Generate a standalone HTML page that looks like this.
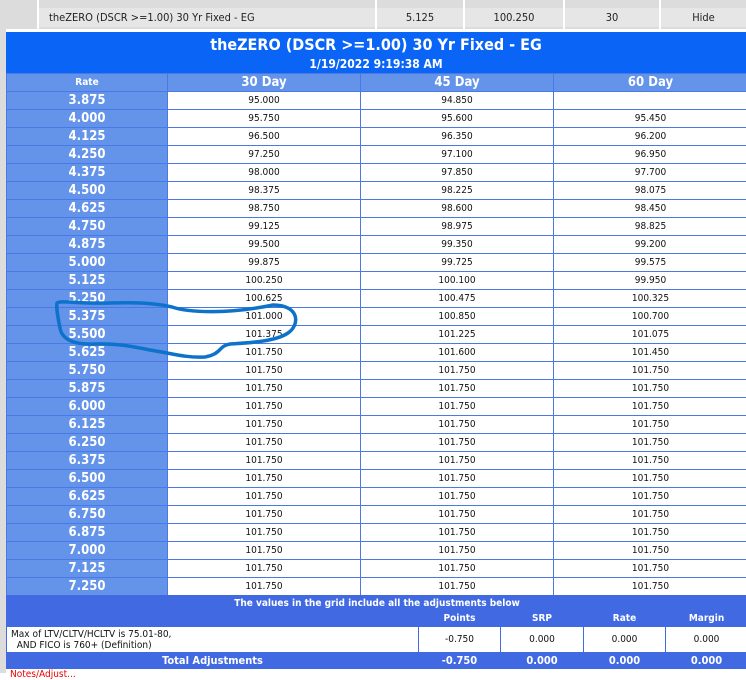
<!DOCTYPE html>
<html><head><meta charset="utf-8"><style>
body{margin:0;width:746px;height:673px;overflow:hidden;background:#fff;font-family:"DejaVu Sans Condensed","DejaVu Sans","Liberation Sans",sans-serif;position:relative}
.top{position:absolute;left:0;top:0;width:746px;height:29px;background:#dcdcdc}
.top div{position:absolute;top:8px;height:19px;background:#e6e6e6;font-size:11px;line-height:19px;color:#222}
.top i{position:absolute;top:0;width:2px;height:29px;background:#fff}
.strip{position:absolute;left:0;top:29px;width:6px;height:644px;background:#dcdcdc}
.hdr{position:absolute;left:6px;top:32px;width:740px;height:41px;background:#0a64f5;color:#fff;text-align:center;font-weight:bold}
table{position:absolute;left:6px;border-collapse:collapse;table-layout:fixed;width:741px}
td{border:1px solid #4a78e6;padding:0;text-align:center;font-size:10px;color:#111;height:17px;line-height:17px;overflow:hidden;white-space:nowrap}
td.r{background:#6493ea;color:#fff;font-weight:bold;font-size:13px}
tr.ch td{background:#6493ea;color:#fff;font-weight:bold;font-size:13px}
.ft td{background:#4169e1;color:#fff;font-weight:bold;font-size:10px;border-color:#4169e1;height:14px;line-height:14px}
.ft tr.w td{background:#fff;color:#111;font-weight:normal;border-color:#4169e1;height:25px;line-height:25px}
</style></head><body>
<div class="top">
<i style="left:37px"></i><i style="left:375px"></i><i style="left:463px"></i><i style="left:563px"></i><i style="left:659px"></i>
<div style="left:39px;width:336px;padding-left:10px;box-sizing:border-box">theZERO (DSCR &gt;=1.00) 30 Yr Fixed - EG</div>
<div style="left:377px;width:86px;text-align:center">5.125</div>
<div style="left:465px;width:98px;text-align:center">100.250</div>
<div style="left:565px;width:94px;text-align:center">30</div>
<div style="left:661px;width:85px;text-align:center">Hide</div>
</div>
<div class="strip"></div>
<div class="hdr"><div style="font-size:16px;line-height:22px;padding-top:2px">theZERO (DSCR &gt;=1.00) 30 Yr Fixed - EG</div><div style="font-size:12px;line-height:15px;padding-top:1px">1/19/2022 9:19:38 AM</div></div>
<table style="top:73px">
<colgroup><col style="width:161px"><col style="width:193px"><col style="width:193px"><col style="width:194px"></colgroup>
<tr class="ch"><td style="font-size:10px">Rate</td><td>30 Day</td><td>45 Day</td><td>60 Day</td></tr>
<tr><td class="r">3.875</td><td>95.000</td><td>94.850</td><td></td></tr>
<tr><td class="r">4.000</td><td>95.750</td><td>95.600</td><td>95.450</td></tr>
<tr><td class="r">4.125</td><td>96.500</td><td>96.350</td><td>96.200</td></tr>
<tr><td class="r">4.250</td><td>97.250</td><td>97.100</td><td>96.950</td></tr>
<tr><td class="r">4.375</td><td>98.000</td><td>97.850</td><td>97.700</td></tr>
<tr><td class="r">4.500</td><td>98.375</td><td>98.225</td><td>98.075</td></tr>
<tr><td class="r">4.625</td><td>98.750</td><td>98.600</td><td>98.450</td></tr>
<tr><td class="r">4.750</td><td>99.125</td><td>98.975</td><td>98.825</td></tr>
<tr><td class="r">4.875</td><td>99.500</td><td>99.350</td><td>99.200</td></tr>
<tr><td class="r">5.000</td><td>99.875</td><td>99.725</td><td>99.575</td></tr>
<tr><td class="r">5.125</td><td>100.250</td><td>100.100</td><td>99.950</td></tr>
<tr><td class="r">5.250</td><td>100.625</td><td>100.475</td><td>100.325</td></tr>
<tr><td class="r">5.375</td><td>101.000</td><td>100.850</td><td>100.700</td></tr>
<tr><td class="r">5.500</td><td>101.375</td><td>101.225</td><td>101.075</td></tr>
<tr><td class="r">5.625</td><td>101.750</td><td>101.600</td><td>101.450</td></tr>
<tr><td class="r">5.750</td><td>101.750</td><td>101.750</td><td>101.750</td></tr>
<tr><td class="r">5.875</td><td>101.750</td><td>101.750</td><td>101.750</td></tr>
<tr><td class="r">6.000</td><td>101.750</td><td>101.750</td><td>101.750</td></tr>
<tr><td class="r">6.125</td><td>101.750</td><td>101.750</td><td>101.750</td></tr>
<tr><td class="r">6.250</td><td>101.750</td><td>101.750</td><td>101.750</td></tr>
<tr><td class="r">6.375</td><td>101.750</td><td>101.750</td><td>101.750</td></tr>
<tr><td class="r">6.500</td><td>101.750</td><td>101.750</td><td>101.750</td></tr>
<tr><td class="r">6.625</td><td>101.750</td><td>101.750</td><td>101.750</td></tr>
<tr><td class="r">6.750</td><td>101.750</td><td>101.750</td><td>101.750</td></tr>
<tr><td class="r">6.875</td><td>101.750</td><td>101.750</td><td>101.750</td></tr>
<tr><td class="r">7.000</td><td>101.750</td><td>101.750</td><td>101.750</td></tr>
<tr><td class="r">7.125</td><td>101.750</td><td>101.750</td><td>101.750</td></tr>
<tr><td class="r">7.250</td><td>101.750</td><td>101.750</td><td>101.750</td></tr>
</table>
<table class="ft" style="top:595px">
<colgroup><col style="width:412px"><col style="width:82px"><col style="width:83px"><col style="width:82px"><col style="width:82px"></colgroup>
<tr><td colspan="5" style="height:15px;line-height:15px">The values in the grid include all the adjustments below</td></tr>
<tr><td></td><td>Points</td><td>SRP</td><td>Rate</td><td>Margin</td></tr>
<tr class="w"><td style="text-align:left;line-height:11px;font-size:10px;padding-left:4px;white-space:normal">Max of LTV/CLTV/HCLTV is 75.01-80,<br>&nbsp;&nbsp;AND FICO is 760+ (Definition)</td><td>-0.750</td><td>0.000</td><td>0.000</td><td>0.000</td></tr>
<tr><td style="font-size:11px;height:15px;line-height:15px">Total Adjustments</td><td style="font-size:11px">-0.750</td><td style="font-size:11px">0.000</td><td style="font-size:11px">0.000</td><td style="font-size:11px">0.000</td></tr>
</table>
<div style="position:absolute;left:10px;top:670px;font-size:10px;color:#e00;line-height:10px">Notes/Adjust...</div>
<svg style="position:absolute;left:0;top:0" width="746" height="673"><path d="M57,303 C60,300 80,304 110,303 C140,302 160,304 172,307 C190,313 230,314 273,305 C300,305 300,325 288,333 C275,342 245,343 230,344 C218,346 222,354 205,357 C185,358 170,353 150,350 C130,346 115,343 95,344 C75,345 62,340 60,328 C58,318 56,308 57,303 Z" fill="none" stroke="#0d72c9" stroke-width="3.5" stroke-linecap="round"/></svg>
</body></html>
